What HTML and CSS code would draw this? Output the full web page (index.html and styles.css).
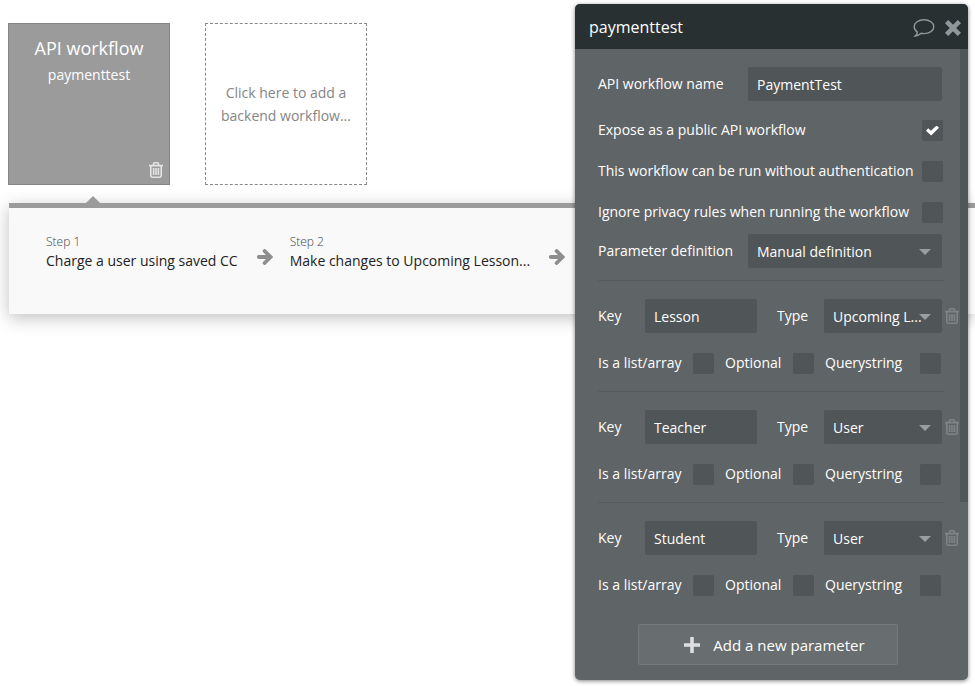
FILE: index.html
```html
<!DOCTYPE html>
<html lang="en">
<head>
  <meta charset="UTF-8" />
  <meta name="viewport" content="width=device-width, initial-scale=1" />
  <title>Backend workflows</title>
  <link rel="stylesheet" href="styles.css">
</head>
<body>

  <!-- Shared icons -->
  <svg class="sprite" aria-hidden="true">
    <symbol id="trash" viewBox="0 0 14 16">
      <path d="M0 3.6H14M4 3.4L4.8 1.2Q5 .8 5.5 .8H8.5Q9 .8 9.2 1.2L10 3.4M1.8 3.8V13.6Q1.8 15.2 3.2 15.2H10.8Q12.2 15.2 12.2 13.6V3.8M4.6 6V13M7 6V13M9.4 6V13" fill="none" stroke="currentColor" stroke-width="1.6" />
    </symbol>
    <symbol id="arrow" viewBox="0 0 16 16">
      <path d="M1.8 8H13M7.6 2L13.6 8L7.6 14" fill="none" stroke="currentColor" stroke-width="3.8" stroke-linecap="round" />
    </symbol>
  </svg>

  <!-- Workflow list -->
  <main>
    <section class="workflows">
      <article class="card">
        <h2>API workflow</h2>
        <p>paymenttest</p>
        <button class="icon-btn card-trash" aria-label="Delete workflow"><svg width="14" height="16"><use href="#trash" /></svg></button>
      </article>
      <button class="card-new">Click here to add a backend workflow...</button>
    </section>

    <section class="steps">
      <div class="step">
        <span>Step 1</span>
        <h3>Charge a user using saved CC</h3>
      </div>
      <svg class="arrow" width="16" height="16"><use href="#arrow" /></svg>
      <div class="step">
        <span>Step 2</span>
        <h3>Make changes to Upcoming Lesson...</h3>
      </div>
      <svg class="arrow" width="16" height="16"><use href="#arrow" /></svg>
    </section>
  </main>

  <!-- Property editor -->
  <aside class="editor">
    <header>
      <h1>paymenttest</h1>
      <button class="icon-btn" aria-label="Comment">
        <svg width="22" height="20" viewBox="0 0 22 20"><path d="M11 1.8C16.4 1.8 20.8 4.8 20.8 8.7S16.4 15.6 11 15.6C10 15.6 9 15.5 8.2 15.3C6.6 16.7 4.6 17.9 2.2 18.1C3.4 17 4.2 15.6 4.4 14.1C2.4 12.8 1.2 10.9 1.2 8.7C1.2 4.8 5.6 1.8 11 1.8Z" fill="none" stroke="currentColor" stroke-width="1.4" /></svg>
      </button>
      <button class="icon-btn" aria-label="Close">
        <svg width="16" height="16" viewBox="0 0 16 16"><path d="M3.2 3.2L12.8 12.8M12.8 3.2L3.2 12.8" stroke="currentColor" stroke-width="4.6" stroke-linecap="square" /></svg>
      </button>
    </header>

    <form>
      <div class="scroll-thumb"></div>

      <div class="row">
        <label for="name">API workflow name</label>
        <input type="text" id="name" value="PaymentTest">
      </div>
      <div class="row check-row">
        <label for="expose">Expose as a public API workflow</label>
        <input type="checkbox" id="expose" checked>
      </div>
      <div class="row check-row">
        <label for="noauth">This workflow can be run without authentication</label>
        <input type="checkbox" id="noauth">
      </div>
      <div class="row check-row">
        <label for="privacy">Ignore privacy rules when running the workflow</label>
        <input type="checkbox" id="privacy">
      </div>
      <div class="row definition">
        <label for="definition">Parameter definition</label>
        <div class="select">
          <select id="definition"><option>Manual definition</option></select>
        </div>
      </div>

      <section class="param">
        <div class="param-main">
          <label for="key1">Key</label>
          <input type="text" id="key1" value="Lesson">
          <label for="type1" class="type-label">Type</label>
          <div class="select"><select id="type1"><option>Upcoming L...</option></select></div>
          <button type="button" class="icon-btn" aria-label="Delete parameter"><svg width="14" height="16"><use href="#trash" /></svg></button>
        </div>
        <div class="param-flags">
          <label>Is a list/array <input type="checkbox"></label>
          <label>Optional <input type="checkbox"></label>
          <label>Querystring <input type="checkbox"></label>
        </div>
      </section>

      <section class="param">
        <div class="param-main">
          <label for="key2">Key</label>
          <input type="text" id="key2" value="Teacher">
          <label for="type2" class="type-label">Type</label>
          <div class="select"><select id="type2"><option>User</option></select></div>
          <button type="button" class="icon-btn" aria-label="Delete parameter"><svg width="14" height="16"><use href="#trash" /></svg></button>
        </div>
        <div class="param-flags">
          <label>Is a list/array <input type="checkbox"></label>
          <label>Optional <input type="checkbox"></label>
          <label>Querystring <input type="checkbox"></label>
        </div>
      </section>

      <section class="param">
        <div class="param-main">
          <label for="key3">Key</label>
          <input type="text" id="key3" value="Student">
          <label for="type3" class="type-label">Type</label>
          <div class="select"><select id="type3"><option>User</option></select></div>
          <button type="button" class="icon-btn" aria-label="Delete parameter"><svg width="14" height="16"><use href="#trash" /></svg></button>
        </div>
        <div class="param-flags">
          <label>Is a list/array <input type="checkbox"></label>
          <label>Optional <input type="checkbox"></label>
          <label>Querystring <input type="checkbox"></label>
        </div>
      </section>

      <button type="button" class="add-btn">
        <svg width="18" height="18" viewBox="0 0 18 18"><path d="M9 1V17M1 9H17" stroke="currentColor" stroke-width="3.6" /></svg>
        Add a new parameter
      </button>
    </form>
  </aside>

</body>
</html>
```

FILE: styles.css
```css
* {
  margin: 0;
  padding: 0;
  box-sizing: border-box;
}

body {
  font-family: 'Open Sans', 'Noto Sans', sans-serif;
  font-size: 14px;
  line-height: 20px;
  background: #fff;
  color: #222;
  min-height: 100vh;
}

button, input, select {
  font: inherit;
  color: inherit;
  border: none;
  background: none;
}

button {
  cursor: pointer;
}

svg {
  display: block;
}

.sprite {
  position: absolute;
  width: 0;
  height: 0;
}

.icon-btn {
  color: #8f979a;
}

/* Workflow cards */
.workflows {
  display: flex;
  gap: 35px;
  padding: 23px 8px 18px;
}

.card, .card-new {
  width: 162px;
  height: 162px;
}

.card {
  position: relative;
  background: #9b9b9b;
  border: 1px solid #858585;
  color: #fff;
  text-align: center;
  padding-top: 11px;
}

.card h2 {
  font-size: 18px;
  font-weight: 400;
  line-height: 26px;
}

.card p {
  line-height: 28px;
}

.card-trash {
  position: absolute;
  right: 6px;
  bottom: 6px;
  color: #e4e4e4;
}

.card-new {
  border: 1px dashed #888;
  color: #858585;
  line-height: 23px;
  padding: 0 12px;
}

/* Step strip under the selected workflow */
.steps {
  position: relative;
  display: flex;
  align-items: center;
  margin-left: 9px;
  padding: 25px 37px 44px;
  background: #f9f9f9;
  border-top: 5px solid #9b9b9b;
  box-shadow: 0 4px 16px rgba(0, 0, 0, 0.25);
}

.steps::before {
  content: '';
  position: absolute;
  left: 77px;
  top: -12px;
  border: 7px solid transparent;
  border-top: none;
  border-bottom-color: #9b9b9b;
}

.step span {
  display: block;
  font-size: 12px;
  font-weight: 300;
  line-height: 18px;
  color: #444;
}

.step h3 {
  font-size: 14px;
  font-weight: 400;
  line-height: 19px;
}

.arrow {
  color: #8e8e8e;
  margin: 10px 17px 0 19px;
}

/* Property editor */
.editor {
  position: absolute;
  top: 4px;
  right: 7px;
  width: 393px;
  border-radius: 5px;
  background: #5f6466;
  color: #fff;
  overflow: hidden;
  box-shadow: 0 1px 4px rgba(0, 0, 0, 0.5);
}

.editor header {
  display: flex;
  align-items: center;
  gap: 10px;
  height: 45px;
  padding: 2px 7px 0 14px;
  background: #293031;
}

.editor h1 {
  flex: 1;
  font-size: 16px;
  font-weight: 400;
  padding-bottom: 2px;
}

.editor form {
  position: relative;
  padding: 18px 9px 15px 23px;
}

.scroll-thumb {
  position: absolute;
  top: 0;
  right: 0;
  width: 8px;
  height: 453px;
  background: #515658;
}

.row {
  display: flex;
  align-items: center;
  justify-content: space-between;
  margin: 0 17px 19px 0;
}

.row label {
  padding-bottom: 1px;
}

.row > input[type="text"], .row .select {
  width: 194px;
}

.editor input[type="text"], .editor select {
  height: 34px;
  padding: 0 9px;
  border-radius: 2px;
  background: #505557;
}

.editor select {
  padding-top: 2px;
}

.select {
  position: relative;
}

.select select {
  display: block;
  appearance: none;
  width: 100%;
}

.select::after {
  content: '';
  position: absolute;
  right: 11px;
  top: 15px;
  border: 6px solid transparent;
  border-top-color: #989d9f;
  border-bottom: none;
  pointer-events: none;
}

.editor input[type="checkbox"] {
  appearance: none;
  display: grid;
  place-content: center;
  width: 21px;
  height: 21px;
  border-radius: 2px;
  background: #505557;
}

.editor input[type="checkbox"]:checked::before {
  content: '';
  width: 13px;
  height: 10px;
  background: #fff;
  clip-path: polygon(0 52%, 17% 28%, 38% 52%, 82% 0, 100% 22%, 40% 100%);
}

.check-row {
  margin: 0 16px 20px 0;
}

.definition {
  margin: -9px 17px 12px 0;
}

.param::before {
  content: '';
  display: block;
  height: 1px;
  margin: 0 15px 18px 0;
  background: #565b5d;
}

.param-main {
  display: grid;
  grid-template-columns: 47px 112px 67px 1fr 17px;
  align-items: center;
}

.param-main input {
  width: 100%;
}

.type-label {
  padding-left: 20px;
}

.param-main .icon-btn {
  justify-self: end;
  color: #7f8587;
}

.param-flags {
  display: grid;
  grid-template-columns: 116px 89px 1fr;
  gap: 11px;
  margin: 20px 18px 17px 0;
}

.param-flags label {
  display: flex;
  justify-content: space-between;
}

.add-btn {
  display: flex;
  align-items: center;
  justify-content: center;
  gap: 12px;
  width: 260px;
  height: 41px;
  margin: 28px 0 0 40px;
  padding-left: 12px;
  border: 1px solid #757a7c;
  border-radius: 2px;
  background: #686d6f;
  font-size: 15px;
}

.add-btn svg {
  color: #dcdedf;
}
```
